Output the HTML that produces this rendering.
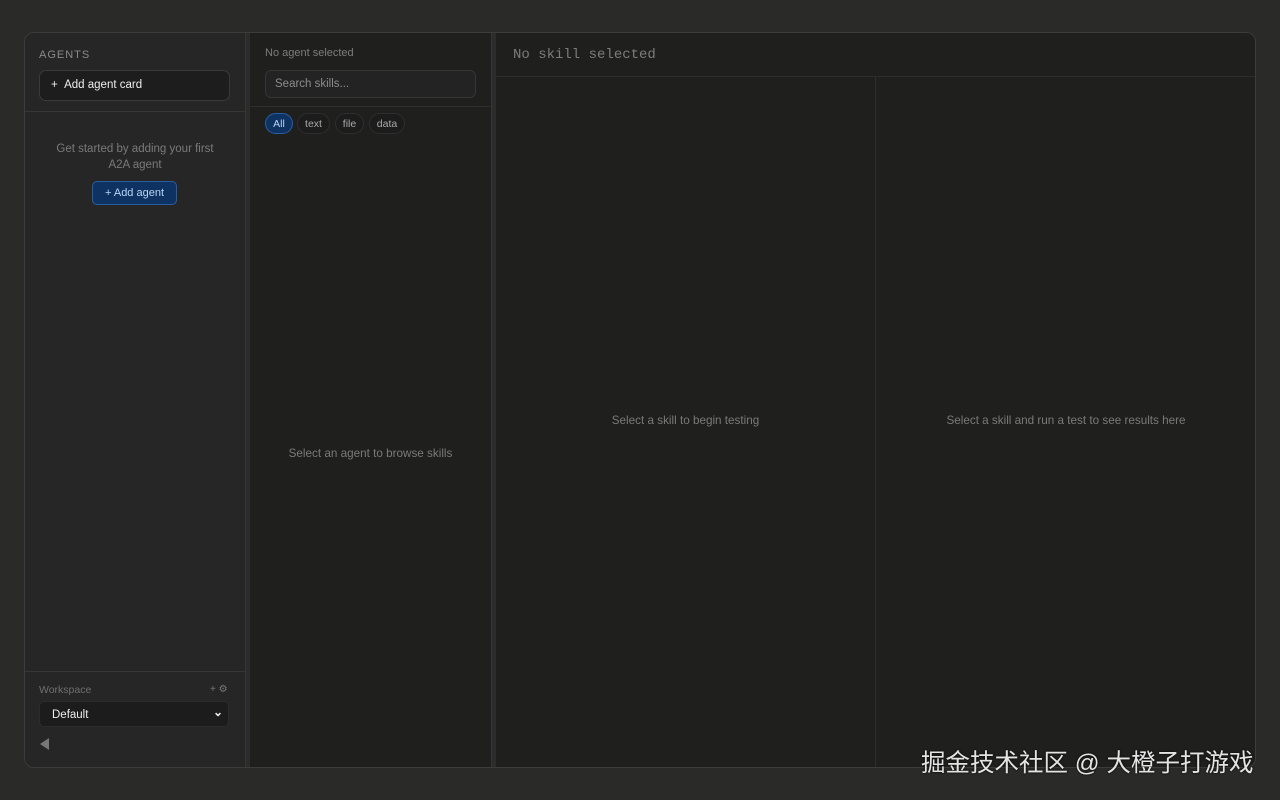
<!DOCTYPE html>
<html><head><meta charset="utf-8"><style>
*{box-sizing:border-box;margin:0;padding:0}
body{width:1280px;height:800px;background:#2a2a29;font-family:"Liberation Sans",sans-serif;position:relative;overflow:hidden}
.app{position:absolute;left:24px;top:32px;width:1232px;height:736px;border:1px solid #3c3c3c;border-radius:10px;overflow:hidden;background:#1f1f1e}
.side{position:absolute;left:0;top:0;width:220px;height:100%;background:#262626}
.h1{position:absolute;left:14px;top:16px;font-size:11px;letter-spacing:1px;color:#8a8a8a}
.addcard{position:absolute;left:14px;top:37px;width:191px;height:31px;border:1px solid #3a3a3a;border-radius:7px;background:#1d1d1d;color:#eee;font-size:11.5px;padding:8px 0 0 11px}
.sep{position:absolute;left:0;width:220px;height:1px;background:#363636}
.empty{position:absolute;left:0;width:220px;top:108px;text-align:center;color:#7a7a7a;font-size:11.5px;line-height:16px}
.btn{position:absolute;left:67px;top:148px;width:85px;height:24px;border:1px solid #2a5da0;background:#0e3362;border-radius:5px;color:#b9d3f5;font-size:11px;text-align:center;line-height:23px}
.ws{position:absolute;left:14px;top:651px;font-size:10.5px;color:#6f6f6f}
.wsi{position:absolute;left:185px;top:651px;font-size:10px;color:#777}
.sel{position:absolute;left:14px;top:668px;width:190px;height:26px;background:#1c1c1c;border:1px solid #2c2c2c;border-radius:5px;color:#eee;font-size:11.5px;padding:7px 0 0 12px}
.tri{position:absolute;left:15px;top:705px;width:0;height:0;border-top:6px solid transparent;border-bottom:6px solid transparent;border-right:9px solid #777}
.hdl{position:absolute;top:0;width:5px;height:100%;background:#2c2c2c;border-left:1px solid #353535}
.mid{position:absolute;left:225px;top:0;width:241px;height:100%;background:#1f1f1e}
.nas{position:absolute;left:15px;top:14px;font-size:11px;color:#7d7d7d}
.search{position:absolute;left:15px;top:37px;width:211px;height:28px;border:1px solid #353535;border-radius:6px;background:#232323;color:#8c8c8c;font-size:11.5px;padding:7px 0 0 9px}
.chip{position:absolute;top:80px;height:21px;border-radius:11px;border:1px solid #2e2e2e;background:#1c1c1c;color:#aaa;font-size:10.5px;line-height:20px;text-align:center}
.ctr{position:absolute;font-size:11.7px;color:#7a7a7a;text-align:center}
.right{position:absolute;left:471px;top:0;right:0;height:100%;background:#1f1f1e}
.rh{position:absolute;left:17px;top:14px;font-family:"Liberation Mono",monospace;font-size:14px;color:#7c7c7c}
</style></head><body>
<div class="app">
 <div class="side">
  <div class="h1">AGENTS</div>
  <div class="addcard">+&nbsp;&nbsp;Add agent card</div>
  <div class="sep" style="top:78px"></div>
  <div class="empty">Get started by adding your first<br>A2A agent</div>
  <div class="btn">+ Add agent</div>
  <div class="sep" style="top:638px"></div>
  <div class="ws">Workspace</div>
  <div class="wsi">+ ⚙</div>
  <div class="sel">Default<span style="position:absolute;right:5px;top:3px;font-size:12px;font-weight:bold">&#8964;</span></div>
  <div class="tri"></div>
 </div>
 <div class="hdl" style="left:220px"></div>
 <div class="mid">
  <div class="nas">No agent selected</div>
  <div class="search">Search skills...</div>
  <div class="sep" style="top:73px;width:241px;background:#2e2e2e"></div>
  <div class="chip" style="left:15px;width:28px;background:#0e3362;border-color:#2a5da0;color:#b9d3f5">All</div>
  <div class="chip" style="left:47px;width:33px">text</div>
  <div class="chip" style="left:85px;width:29px">file</div>
  <div class="chip" style="left:119px;width:36px">data</div>
  <div class="ctr" style="left:0;width:241px;top:414px">Select an agent to browse skills</div>
 </div>
 <div class="hdl" style="left:466px"></div>
 <div class="right">
  <div class="rh">No skill selected</div>
  <div class="sep" style="top:43px;width:760px;background:#2e2e2e"></div>
  <div style="position:absolute;left:379px;top:44px;width:1px;bottom:0;background:#2e2e2e"></div>
  <div class="ctr" style="left:0;width:379px;top:381px">Select a skill to begin testing</div>
  <div class="ctr" style="left:380px;width:380px;top:381px">Select a skill and run a test to see results here</div>
 </div>
</div>
<div style="position:absolute;left:921px;top:748px;font-family:'Liberation Sans','Noto Sans CJK SC',sans-serif;font-size:24.5px;line-height:32px;color:#e4e4e4;text-shadow:0 0 2px #000;white-space:nowrap">掘金技术社区 @ 大橙子打游戏</div>
</body></html>
